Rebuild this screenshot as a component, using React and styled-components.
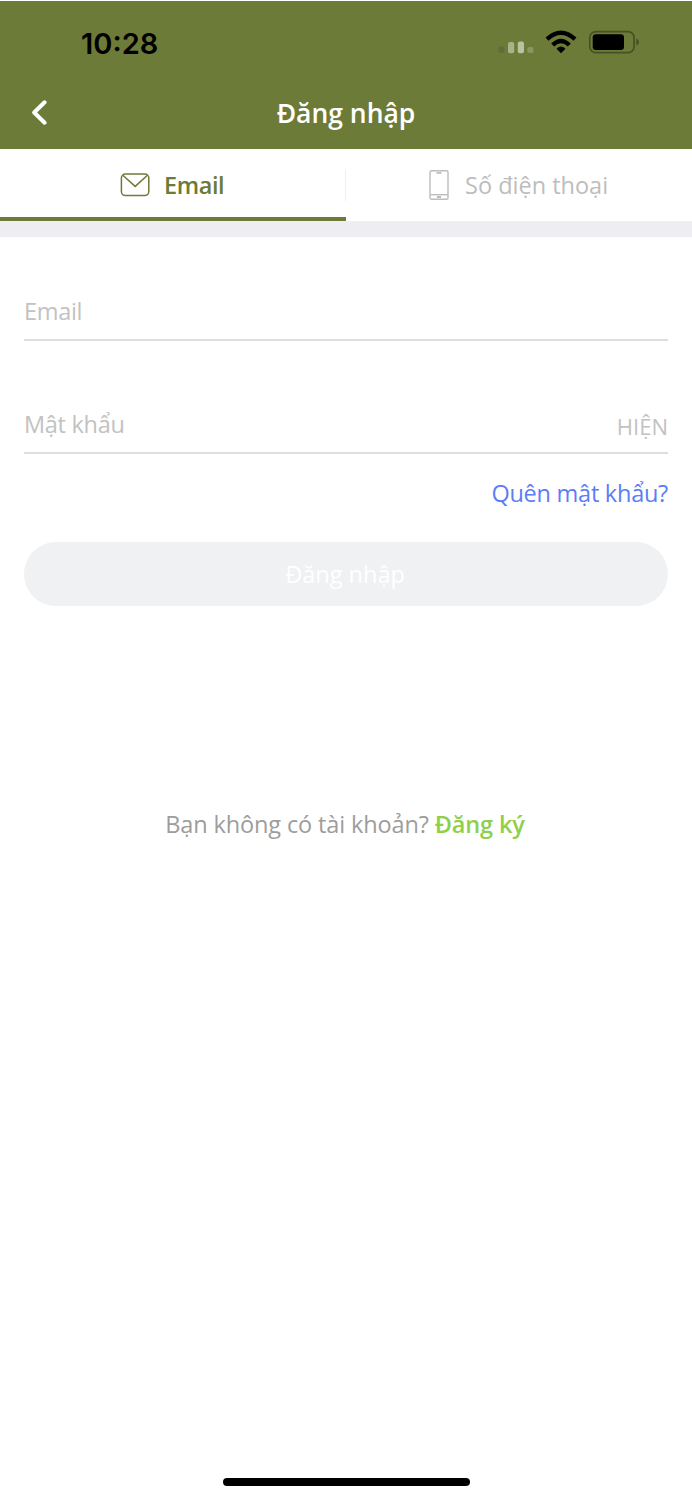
import React from "react";
import styled, { createGlobalStyle } from "styled-components";

const GlobalStyle = createGlobalStyle`
  * {
    box-sizing: border-box;
  }

  body {
    margin: 0;
    background: #ffffff;
    font-family: "Open Sans", "Noto Sans", sans-serif;
  }

  svg {
    display: block;
    flex: none;
  }
`;

const Screen = styled.div`
  display: flex;
  flex-direction: column;
  width: 692px;
  height: 1500px;
  padding-top: 1px;
  overflow: hidden;
`;

const Header = styled.header`
  height: 148px;
  background: #6c7b37;
`;

const StatusBar = styled.div`
  display: flex;
  align-items: center;
  justify-content: space-between;
  height: 82px;
  padding: 0 52px 0 81px;
`;

const Clock = styled.span`
  padding-top: 3px;
  font-family: Inter, sans-serif;
  font-size: 29px;
  font-weight: 600;
  line-height: 36px;
  color: #000000;
`;

const NavBar = styled.div`
  display: grid;
  grid-template-columns: 80px 1fr 80px;
  align-items: center;
  height: 60px;
`;

const BackButton = styled.button`
  display: flex;
  padding: 0 0 0 30px;
  border: 0;
  background: none;
`;

const Title = styled.h1`
  margin: 0;
  text-align: center;
  white-space: nowrap;
  font-size: 26.5px;
  font-weight: 600;
  line-height: 36px;
  color: #ffffff;
`;

const Tabs = styled.nav`
  display: flex;
  height: 72px;
`;

const Tab = styled.button`
  display: flex;
  align-items: center;
  gap: ${(props) => props.$gap};
  width: 346px;
  padding: 3px 0 0 ${(props) => props.$indent};
  border: 0;
  border-bottom: 4px solid ${(props) => (props.$active ? "#6c7b37" : "transparent")};
  background: none;
  font-family: inherit;
  font-size: 23.5px;
  font-weight: ${(props) => (props.$active ? 600 : 400)};
  letter-spacing: ${(props) => props.$spacing};
  white-space: nowrap;
  color: ${(props) => (props.$active ? "#6c7b37" : "#bdbdbd")};
`;

const TabDivider = styled.div`
  width: 1px;
  height: 32px;
  margin: 20px 0 0 -1px;
  background: #efeff0;
`;

const Band = styled.div`
  height: 16px;
  background: #eeedf2;
`;

const Form = styled.form`
  display: flex;
  flex-direction: column;
  padding: 0 24px;
`;

const Field = styled.div`
  display: flex;
  align-items: center;
  justify-content: space-between;
  height: 60px;
  margin-top: ${(props) => props.$top};
  padding-top: 2px;
  border-bottom: 2px solid #dedede;
  color: #c2c2c2;
`;

const Placeholder = styled.span`
  font-size: 23.5px;
  line-height: 32px;
  letter-spacing: -0.3px;
`;

const ShowPassword = styled.span`
  padding-top: 3px;
  font-size: 22px;
  line-height: 32px;
`;

const ForgotLink = styled.a`
  align-self: flex-end;
  margin-top: 22px;
  font-size: 23.5px;
  line-height: 34px;
  letter-spacing: -0.25px;
  color: #5b7df8;
`;

const SubmitButton = styled.button`
  height: 64px;
  margin-top: 32px;
  padding: 0 2px 0 0;
  border: 0;
  border-radius: 32px;
  background: #f0f1f3;
  font-family: inherit;
  font-size: 23.5px;
  font-weight: 500;
  color: #ffffff;
`;

const SignUp = styled.p`
  display: flex;
  align-items: baseline;
  justify-content: center;
  gap: 6px;
  margin: 201px 0 0;
  padding-right: 2px;
  white-space: nowrap;
  font-size: 23.5px;
  line-height: 34px;
  letter-spacing: -0.13px;
  color: #9d9d9d;
`;

const SignUpLink = styled.a`
  font-weight: 600;
  color: #8fd04b;
`;

const HomeIndicator = styled.div`
  align-self: center;
  width: 247px;
  height: 8px;
  margin-top: auto;
  margin-bottom: 14px;
  border-radius: 4px;
  background: #000000;
`;

const StatusIcons = () => (
  <svg width="142" height="26" viewBox="498 29 142 26">
    <rect x="498.3" y="46.5" width="6" height="6.5" rx="2" fill="#5f6d38" />
    <rect x="508" y="42" width="6.2" height="11.3" rx="2" fill="#abb28a" />
    <rect x="517.8" y="41.5" width="6.2" height="11.8" rx="2" fill="#bcc2a0" />
    <rect x="527.3" y="47" width="6.2" height="6" rx="2" fill="#8b9760" />
    <g fill="none" stroke="#000000" strokeWidth="4.3">
      <path d="M547 39.2 Q561 26.5 575 39.2" />
      <path d="M552.7 45 Q561 37 569.3 45" />
    </g>
    <path d="M556.5 48.7 Q561 44.3 565.5 48.7 L561 53.2 Z" fill="#000000" />
    <rect x="589.8" y="31.7" width="44.3" height="21" rx="6" fill="none" stroke="#475124" strokeWidth="1.7" />
    <rect x="592.7" y="34.3" width="31.3" height="15.7" rx="3.2" fill="#000000" />
    <path d="M636.3 38.6 Q639 39.6 639 42.2 Q639 44.8 636.3 45.8 Z" fill="#475124" />
  </svg>
);

const BackIcon = () => (
  <svg width="20" height="26" viewBox="0 0 20 26">
    <path
      d="M14.6 2.3 L4.2 12.5 L14.6 22.7"
      fill="none"
      stroke="#ffffff"
      strokeWidth="4"
      strokeLinecap="round"
      strokeLinejoin="round"
    />
  </svg>
);

const MailIcon = () => (
  <svg width="30" height="24" viewBox="0 0 30 24" fill="none" stroke="#6c7b37" strokeWidth="1.5">
    <rect x="1.4" y="1" width="27.4" height="21.6" rx="4" />
    <path d="M2.8 2.3 L15.2 13.4 L27.4 2.3" />
  </svg>
);

const PhoneIcon = () => (
  <svg width="20" height="30" viewBox="0 0 20 30" fill="none" stroke="#bdbdbd" strokeWidth="1.4">
    <rect x="1" y="0.8" width="18" height="28.4" rx="1.5" />
    <path d="M1 24.7 H19" />
    <path d="M7.5 2.8 H12.5 M8 27 H12" strokeWidth="1.8" />
  </svg>
);

const App = () => {
  return (
    <>
      <GlobalStyle />
      <Screen>
        <Header>
          <StatusBar>
            <Clock>10:28</Clock>
            <StatusIcons />
          </StatusBar>
          <NavBar>
            <BackButton type="button" aria-label="Back">
              <BackIcon />
            </BackButton>
            <Title>Đăng nhập</Title>
          </NavBar>
        </Header>
        <Tabs>
          <Tab $active $indent="120px" $gap="14px" $spacing="-0.4px">
            <MailIcon />
            Email
          </Tab>
          <TabDivider />
          <Tab $indent="83px" $gap="16px" $spacing="0">
            <PhoneIcon />
            Số điện thoại
          </Tab>
        </Tabs>
        <Band />
        <Form>
          <Field $top="44px">
            <Placeholder>Email</Placeholder>
          </Field>
          <Field $top="53px">
            <Placeholder>Mật khẩu</Placeholder>
            <ShowPassword>HIỆN</ShowPassword>
          </Field>
          <ForgotLink>Quên mật khẩu?</ForgotLink>
          <SubmitButton type="button">Đăng nhập</SubmitButton>
          <SignUp>
            Bạn không có tài khoản?
            <SignUpLink>Đăng ký</SignUpLink>
          </SignUp>
        </Form>
        <HomeIndicator />
      </Screen>
    </>
  );
};

export default App;
